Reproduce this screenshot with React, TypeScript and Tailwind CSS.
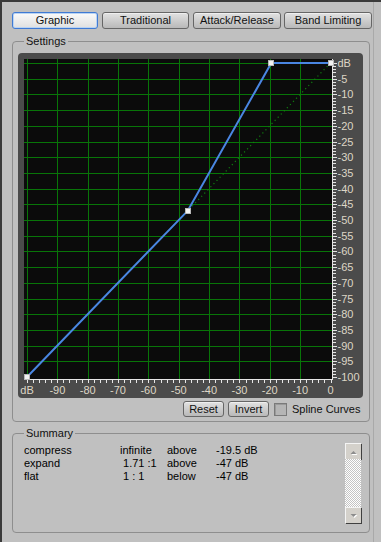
import React from "react";

const X = (db: number) => 9 + (db + 100) * 3.035;
const Y = (db: number) => 10 - db * 3.14;

function Chart() {
  const vLines: number[] = [];
  for (let d = -100; d <= -10; d += 10) vLines.push(Math.round(X(d)) + 0.5);
  const hLines: number[] = [];
  for (let d = 0; d >= -95; d -= 5) hLines.push(Math.round(Y(d)) + 0.5);
  const rTicks: { y: number; major: boolean }[] = [];
  for (let d = 0; d >= -100; d -= 1) rTicks.push({ y: Math.round(Y(d)) + 0.5, major: d % 5 === 0 });
  const bTicks: number[] = [];
  for (let d = -100; d <= 0; d += 2) bTicks.push(Math.round(X(d)) + 0.5);
  const rLabels: { t: string; y: number }[] = [];
  for (let d = 0; d >= -100; d -= 5) rLabels.push({ t: d === 0 ? "dB" : String(d), y: Y(d) });
  const bLabels: { t: string; x: number }[] = [];
  for (let d = -100; d <= 0; d += 10) bLabels.push({ t: d === -100 ? "dB" : String(d), x: X(d) });

  const pts: [number, number][] = [
    [X(-100), Y(-100)],
    [X(-47), Y(-47)],
    [X(-19.5), Y(0)],
    [X(0), Y(0)],
  ];

  return (
    <svg width={345} height={345} viewBox="0 0 345 345" className="block">
      <rect x={6} y={6} width={308} height={320} fill="#0b0b0b" />
      {vLines.map((x, i) => (
        <line key={"v" + i} x1={x} x2={x} y1={6} y2={326} stroke="#087508" strokeWidth={1} />
      ))}
      {hLines.map((y, i) => (
        <line key={"h" + i} x1={6} x2={314} y1={y} y2={y} stroke="#087508" strokeWidth={1} />
      ))}
      <line x1={314.5} x2={314.5} y1={6} y2={327} stroke="#e6e6e6" strokeWidth={1} />
      <line x1={6} x2={315} y1={326.5} y2={326.5} stroke="#e6e6e6" strokeWidth={1} />
      {rTicks.map((t, i) => (
        <line key={"rt" + i} x1={315} x2={t.major ? 319 : 318} y1={t.y} y2={t.y} stroke="#e6e6e6" strokeWidth={1} />
      ))}
      {bTicks.map((x, i) => (
        <line key={"bt" + i} x1={x} x2={x} y1={327} y2={330} stroke="#e6e6e6" strokeWidth={1} />
      ))}
      {rLabels.map((l, i) => (
        <text
          key={"rl" + i}
          x={319.5}
          y={l.y + 4}
          fill="#ddd6c6"
          fontSize={11}
          fontFamily="'Liberation Sans', Arial, sans-serif"
        >
          {l.t}
        </text>
      ))}
      {bLabels.map((l, i) => (
        <text
          key={"bl" + i}
          x={l.x}
          y={341}
          fill="#ddd6c6"
          fontSize={11}
          textAnchor="middle"
          fontFamily="'Liberation Sans', Arial, sans-serif"
        >
          {l.t}
        </text>
      ))}
      <line
        x1={X(-100)}
        y1={Y(-100)}
        x2={X(0)}
        y2={Y(0)}
        stroke="#108010"
        strokeWidth={1.2}
        strokeDasharray="1.2 3.2"
      />
      <polyline
        points={pts.map((p) => p.join(",")).join(" ")}
        fill="none"
        stroke="#4a86e2"
        strokeWidth={2}
        strokeLinejoin="round"
      />
      {pts.map((p, i) => (
        <rect
          key={"p" + i}
          x={Math.round(p[0]) - 2.5}
          y={Math.round(p[1]) - 2.5}
          width={5}
          height={5}
          fill="#f2f2f2"
          stroke="#b8b8b8"
          strokeWidth={1}
        />
      ))}
    </svg>
  );
}

function TabButton({ label, active, w }: { label: string; active?: boolean; w: string }) {
  return (
    <button
      className={
        active
          ? `${w} h-[17px] rounded-[3px] border border-[#3f7ad4] bg-linear-to-b from-[#fafafa] to-[#e0e0e0] shadow-[inset_0_0_0_1px_#b9d3f3] text-[11px] leading-none text-[#111]`
          : `${w} h-[17px] rounded-[3px] border border-[#666666] bg-linear-to-b from-[#e2e2e2] to-[#b9b9b9] shadow-[inset_0_1px_0_#efefef] text-[11px] leading-none text-[#111]`
      }
    >
      {label}
    </button>
  );
}

function SmallButton({ label }: { label: string }) {
  return (
    <button className="w-[41px] h-[16px] rounded-[3px] border border-[#666666] bg-linear-to-b from-[#e2e2e2] to-[#b9b9b9] shadow-[inset_0_1px_0_#efefef] text-[11px] leading-none text-[#111]">
      {label}
    </button>
  );
}

function ScrollArrow({ up }: { up?: boolean }) {
  return (
    <div className="w-[16px] h-[16px] bg-[#d4d1cb] border-t border-l border-[#f4f4f4] shadow-[1px_1px_0_#404040] flex items-center justify-center">
      <svg width={9} height={6} viewBox="0 0 9 6">
        {up ? (
          <>
            <polygon points="1.5,5 4.5,2 7.5,5" fill="#ffffff" transform="translate(1,1)" />
            <polygon points="1.5,5 4.5,2 7.5,5" fill="#8c8c8c" />
          </>
        ) : (
          <>
            <polygon points="1.5,1 7.5,1 4.5,4" fill="#ffffff" transform="translate(1,1)" />
            <polygon points="1.5,1 7.5,1 4.5,4" fill="#8c8c8c" />
          </>
        )}
      </svg>
    </div>
  );
}

export default function App() {
  const rows = [
    ["compress", "infinite", "above", "-19.5 dB"],
    ["expand", " 1.71 :1", "above", "-47 dB"],
    ["flat", " 1 : 1", "below", "-47 dB"],
  ];
  return (
    <div className="w-[381px] h-[542px] bg-[#c0c0c0] border-t-2 border-l-2 border-[#3a3a3a] font-['Liberation_Sans',Arial,sans-serif] text-[11px] text-black overflow-hidden">
      <div className="w-[372px] h-full border-r border-[#a9a9a9] pt-[10px] pl-[10px]">
        <div className="flex h-[17px]">
          <TabButton label="Graphic" active w="w-[86px]" />
          <div className="w-[4px]" />
          <TabButton label="Traditional" w="w-[87px]" />
          <div className="w-[4px]" />
          <TabButton label="Attack/Release" w="w-[88px]" />
          <div className="w-[3px]" />
          <TabButton label="Band Limiting" w="w-[88px]" />
        </div>

        <fieldset className="mt-[6px] w-[358px] border border-[#8e8e8e] rounded-[4px] m-0 p-0 pb-[4px]">
          <legend className="ml-[11px] px-[2px] leading-[13px] text-[#111]">Settings</legend>
          <div className="ml-[5px] mt-[5px] w-[345px] h-[345px] rounded-[4px] bg-[#4b4b4b]">
            <Chart />
          </div>
          <div className="flex items-center h-[16px] mt-[3px] pl-[170px]">
            <SmallButton label="Reset" />
            <div className="w-[4px]" />
            <SmallButton label="Invert" />
            <div className="w-[5px]" />
            <div className="w-[13px] h-[13px] border border-[#7a7a7a] bg-[#b5b5b5] shadow-[inset_1px_1px_0_#9a9a9a]" />
            <span className="ml-[5px] text-[11px] leading-none text-[#111]">Spline Curves</span>
          </div>
        </fieldset>

        <fieldset className="mt-[5px] w-[358px] border border-[#8e8e8e] rounded-[4px] m-0 p-0 pb-[9px]">
          <legend className="ml-[11px] px-[2px] leading-[13px] text-[#111]">Summary</legend>
          <div className="flex mt-[3px]">
            <div className="w-[332px] pl-[11px] pt-[1px]">
              {rows.map((r, i) => (
                <div key={i} className="grid grid-cols-[96px_47px_49px_1fr] leading-[13px] whitespace-pre">
                  <span>{r[0]}</span>
                  <span>{r[1]}</span>
                  <span>{r[2]}</span>
                  <span>{r[3]}</span>
                </div>
              ))}
            </div>
            <div className="w-[16px] h-[80px] flex flex-col">
              <ScrollArrow up />
              <div className="flex-1 bg-[repeating-conic-gradient(#ffffff_0_25%,#c4c4c4_0_50%)] bg-[length:2px_2px]" />
              <ScrollArrow />
            </div>
          </div>
        </fieldset>
      </div>
    </div>
  );
}
